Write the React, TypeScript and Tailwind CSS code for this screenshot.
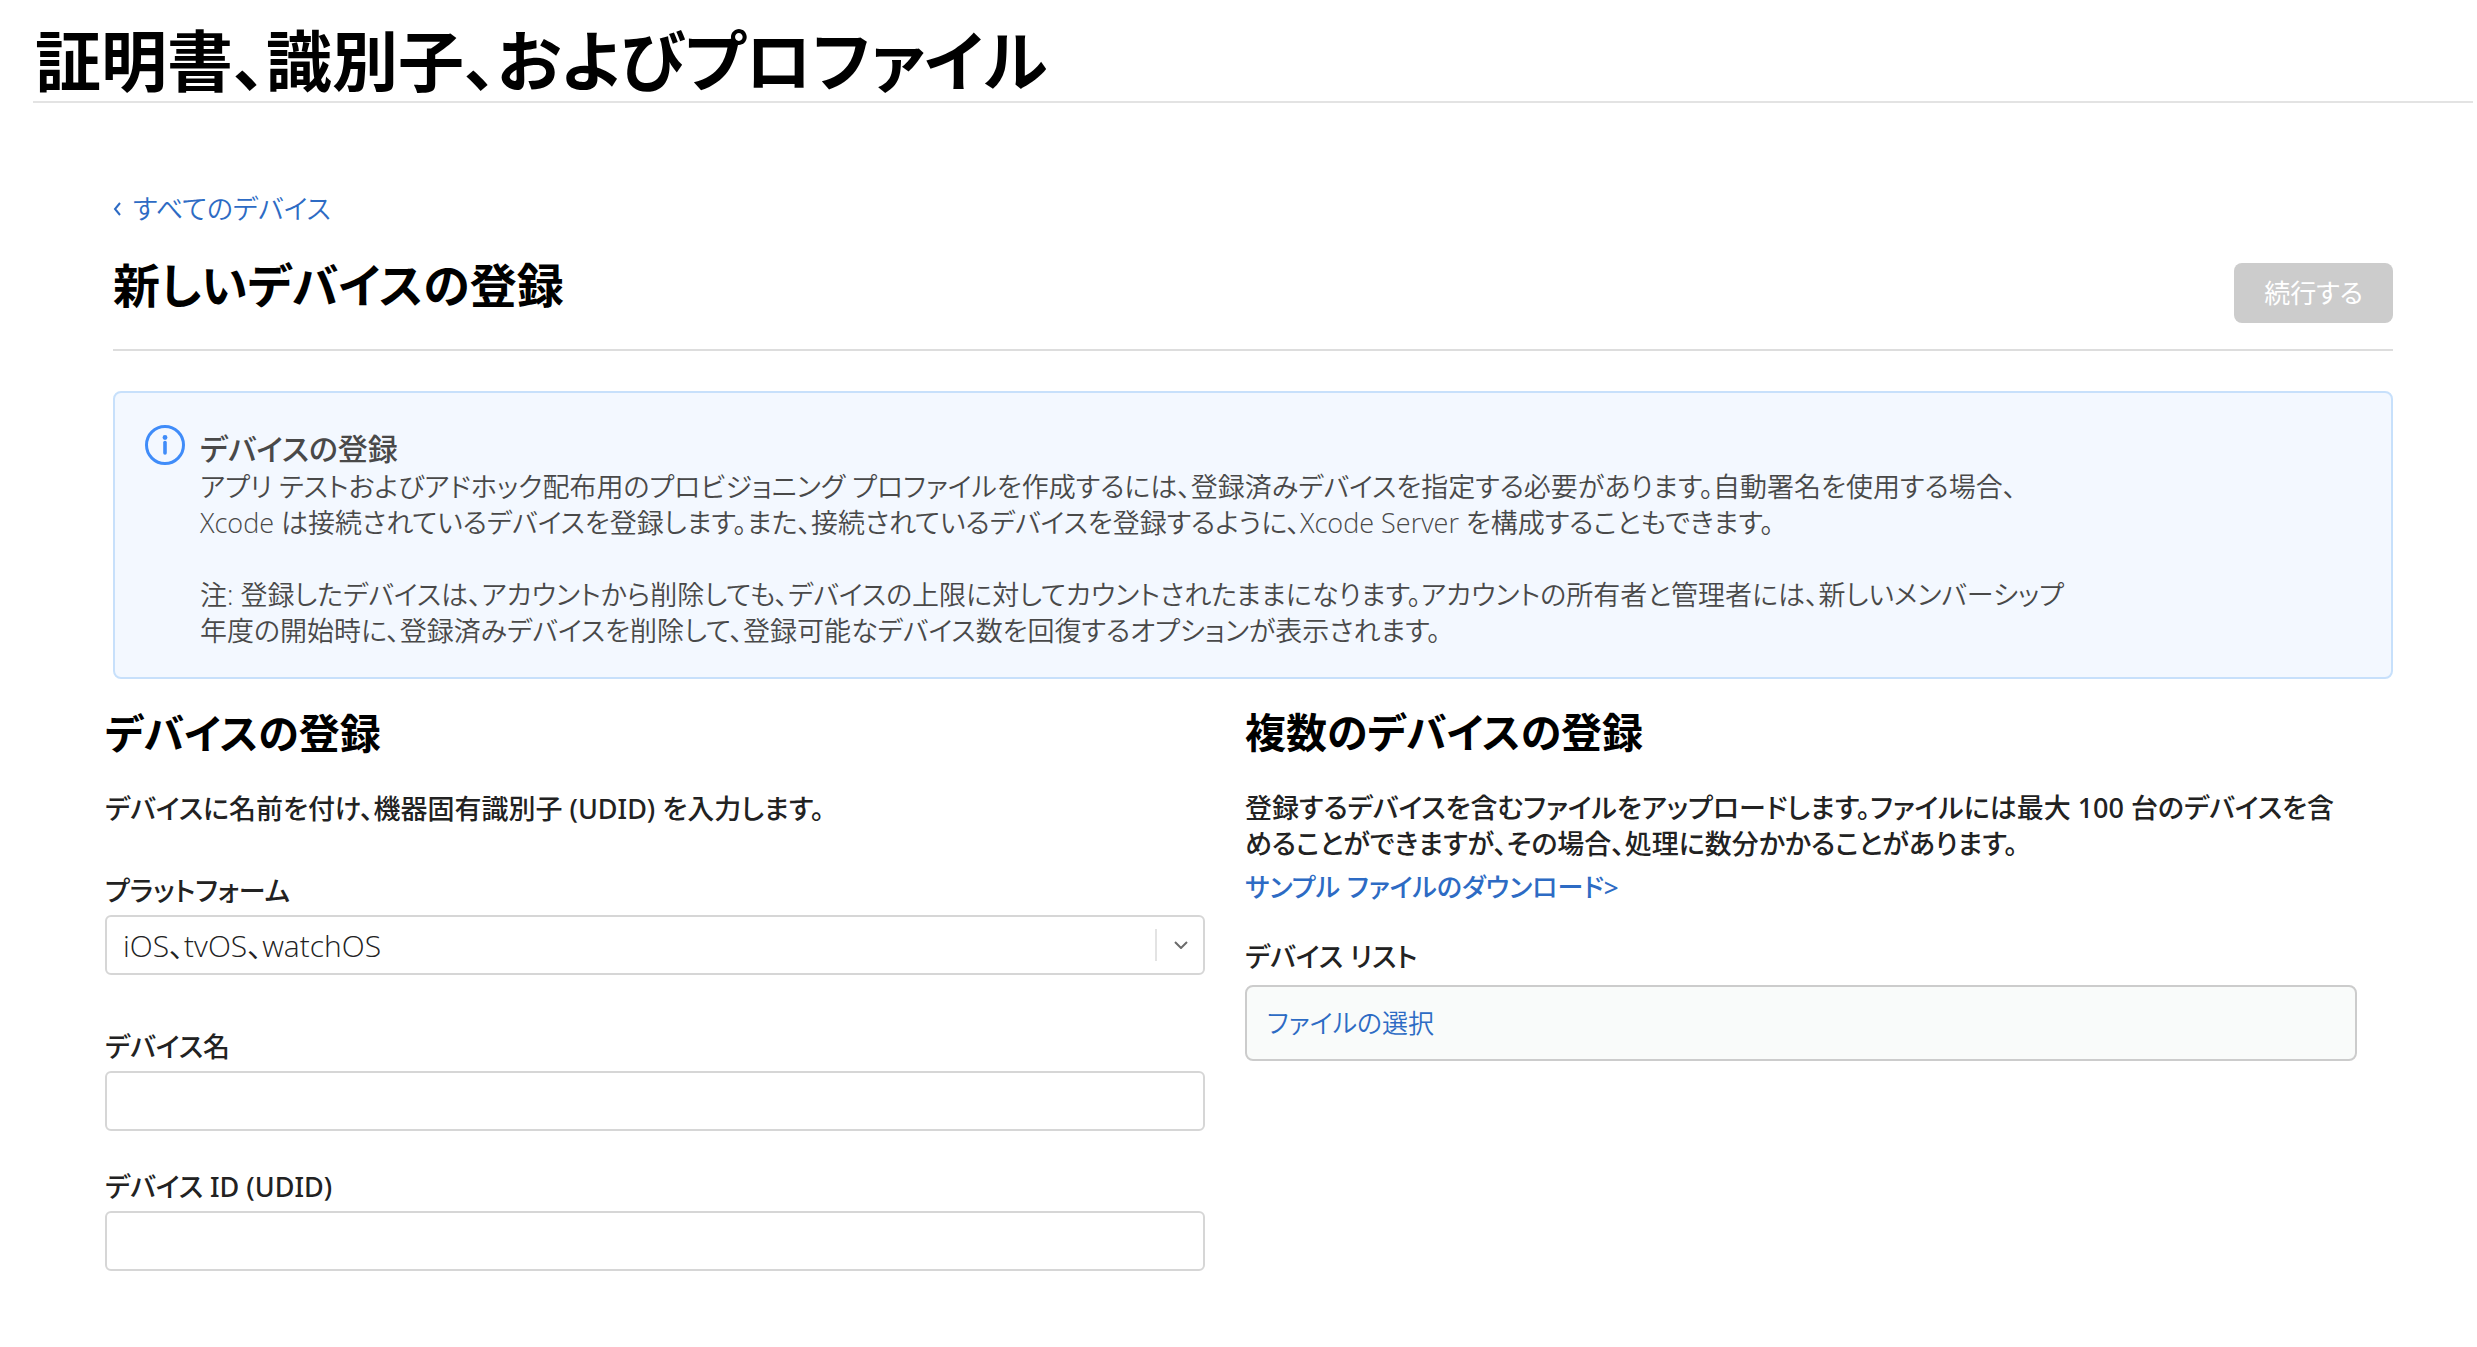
import React from 'react';

function TextField({ id, label }: { id: string; label: string }) {
  return (
    <div className="flex flex-col">
      <label htmlFor={id} className="pb-1 text-[27px] leading-[40px] font-medium">
        {label}
      </label>
      <input
        id={id}
        type="text"
        className="h-[60px] w-full rounded-md border-2 border-[#d6d6d6] bg-white px-4 text-[30px] outline-none focus:border-[#2d6bc4]"
      />
    </div>
  );
}

function InfoIcon() {
  return (
    <svg viewBox="0 0 40 40" className="h-10 w-10 shrink-0" fill="none" aria-hidden="true">
      <circle cx="20" cy="20" r="18.5" stroke="#3f8cf9" strokeWidth="3" />
      <circle cx="20" cy="12.5" r="2.4" fill="#3f8cf9" />
      <path d="M20 17.5V28" stroke="#3f8cf9" strokeWidth="3.6" strokeLinecap="round" />
    </svg>
  );
}

function DeviceForm() {
  return (
    <section>
      <h3 className="text-[41px] leading-[56px] font-bold text-black">デバイスの登録</h3>
      <p className="mt-[30px] text-[27px] leading-[36px] font-medium">
        デバイスに名前を付け、機器固有識別子 (UDID) を入力します。
      </p>
      <div className="mt-11 flex flex-col">
        <label htmlFor="platform" className="pb-1 text-[27px] leading-[40px] font-medium">
          プラットフォーム
        </label>
        <div className="relative">
          <select
            id="platform"
            className="h-[60px] w-full appearance-none rounded-md border-2 border-[#d6d6d6] bg-white pr-16 pl-4 font-['Open_Sans','Noto_Sans_CJK_JP',sans-serif] text-[30px] font-[350] outline-none"
          >
            <option>iOS、tvOS、watchOS</option>
            <option>macOS</option>
          </select>
          <div className="pointer-events-none absolute inset-y-3.5 right-0 flex w-[50px] items-center justify-center border-l-2 border-[#e3e3e3]">
            <svg viewBox="0 0 14 8" className="h-2 w-3.5" fill="none" aria-hidden="true">
              <path d="M1 1L7 7L13 1" stroke="#6b6b6b" strokeWidth="2" />
            </svg>
          </div>
        </div>
      </div>
      <div className="mt-[52px]">
        <TextField id="device-name" label="デバイス名" />
      </div>
      <div className="mt-9">
        <TextField id="device-udid" label="デバイス ID (UDID)" />
      </div>
    </section>
  );
}

function BulkUpload() {
  return (
    <section>
      <h3 className="text-[41px] leading-[54px] font-bold text-black">複数のデバイスの登録</h3>
      <p className="mt-[31px] text-[27px] leading-[36px] font-medium">
        登録するデバイスを含むファイルをアップロードします。ファイルには最大 100 台のデバイスを含
        <br />
        めることができますが、その場合、処理に数分かかることがあります。
      </p>
      <a href="#sample" className="mt-[7px] block text-[26px] leading-[36px] font-medium text-[#2d6bc4]">
        サンプル ファイルのダウンロード&gt;
      </a>
      <div className="mt-8 text-[27px] leading-[40px] font-medium">デバイス リスト</div>
      <div className="mt-2 flex h-[76px] items-center rounded-lg border-2 border-[#cccccc] bg-[#f9fbfa] px-5">
        <label htmlFor="device-list" className="cursor-pointer text-[26px] leading-[40px] font-[350] text-[#2d6bc4]">
          ファイルの選択
        </label>
        <input id="device-list" type="file" className="sr-only" />
      </div>
    </section>
  );
}

export default function App() {
  return (
    <div
      lang="ja"
      className="min-h-screen bg-white pb-16 font-['Noto_Sans','Noto_Sans_CJK_JP',sans-serif] text-[#222222] [font-feature-settings:'palt']"
    >
      <header className="mr-1 ml-[33px] border-b-2 border-[#e3e3e3] pt-5">
        <h1 className="pl-0.5 text-[66px] leading-[81px] font-bold text-black">証明書、識別子、およびプロファイル</h1>
      </header>

      <main>
        <div className="mr-[84px] ml-[113px] pt-[86px]">
          <a href="#devices" className="inline-flex items-center gap-3 text-[27px] leading-[40px] font-[350] text-[#2d6bc4]">
            <svg viewBox="0 0 8 14" className="h-3.5 w-2" fill="none" aria-hidden="true">
              <path d="M7 1L2 7L7 13" stroke="currentColor" strokeWidth="2" />
            </svg>
            すべてのデバイス
          </a>
          <div className="flex items-end justify-between border-b-2 border-[#dddddd] pb-[26px]">
            <h2 className="pb-2 text-[47px] leading-[60px] font-bold text-black">新しいデバイスの登録</h2>
            <button
              type="button"
              disabled
              className="mt-[34px] h-[60px] rounded-lg bg-[#cccccc] px-[30px] text-[26px] text-white"
            >
              続行する
            </button>
          </div>

          <div className="mt-10 flex gap-[15px] rounded-lg border-2 border-[#c7e0fb] bg-[#f3f8ff] pt-[32px] pb-[28px] pl-[30px]">
            <InfoIcon />
            <div className="font-['Open_Sans','Noto_Sans_CJK_JP',sans-serif] text-[#494949]">
              <h3 className="pt-1 text-[30px] leading-[40px] font-medium">デバイスの登録</h3>
              <p className="text-[27px] leading-[36px] font-[350]">
                アプリ テストおよびアドホック配布用のプロビジョニング プロファイルを作成するには、登録済みデバイスを指定する必要があります。自動署名を使用する場合、
                <br />
                Xcode は接続されているデバイスを登録します。また、接続されているデバイスを登録するように、Xcode Server を構成することもできます。
              </p>
              <p className="mt-9 text-[27px] leading-[36px] font-[350]">
                注: 登録したデバイスは、アカウントから削除しても、デバイスの上限に対してカウントされたままになります。アカウントの所有者と管理者には、新しいメンバーシップ
                <br />
                年度の開始時に、登録済みデバイスを削除して、登録可能なデバイス数を回復するオプションが表示されます。
              </p>
            </div>
          </div>
        </div>

        <div className="mt-[26px] mr-[120px] ml-[105px] grid grid-cols-[1100fr_1112fr] gap-10">
          <DeviceForm />
          <BulkUpload />
        </div>
      </main>
    </div>
  );
}
